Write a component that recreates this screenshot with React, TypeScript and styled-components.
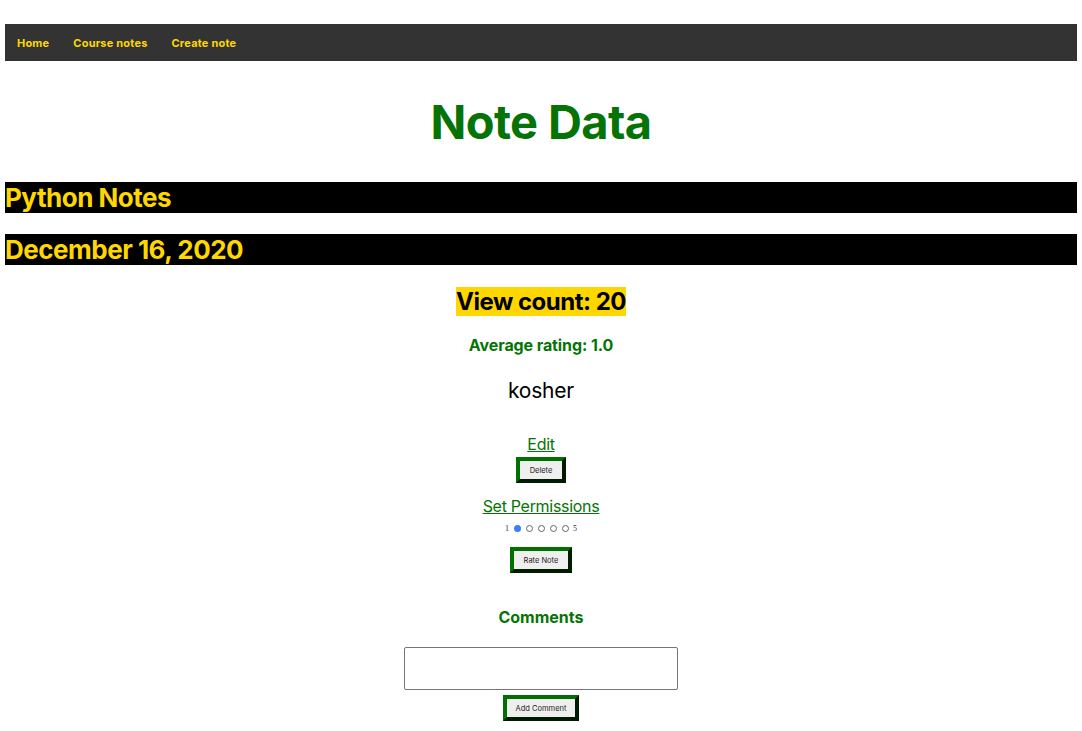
import React from "react";
import styled, { createGlobalStyle } from "styled-components";

const Global = createGlobalStyle`
  html, body { margin: 0; padding: 0; background: #fff; }
  body { font-family: Inter, "Noto Sans", sans-serif; }
`;

const GREEN = "#057305";
const YELLOW = "#ffd700";

const Page = styled.div`
  padding: 24px 5px 0;
  display: flex;
  flex-direction: column;
`;

const Nav = styled.nav`
  background: #333;
  height: 37px;
  display: flex;
  align-items: center;
`;

const NavLink = styled.a`
  color: ${YELLOW};
  font-weight: 700;
  font-size: 11px;
  letter-spacing: 0.2px;
  text-decoration: none;
  padding: 0 12px;
`;

const Title = styled.h1`
  margin: 32px 0 0;
  text-align: center;
  color: ${GREEN};
  font-size: 47px;
  letter-spacing: -0.6px;
  line-height: 58px;
  font-weight: 700;
`;

const Bar = styled.h2<{ $top: number }>`
  margin: ${(p) => p.$top}px 0 0;
  background: #000;
  color: ${YELLOW};
  font-size: 26px;
  letter-spacing: -0.5px;
  line-height: 31px;
  height: 31px;
  font-weight: 700;
`;

const Center = styled.div`
  display: flex;
  flex-direction: column;
  align-items: center;
`;

const ViewCount = styled.h2`
  margin: 22px 0 0;
  background: ${YELLOW};
  color: #000;
  font-size: 24px;
  letter-spacing: -0.5px;
  line-height: 29px;
  font-weight: 700;
`;

const Rating = styled.h3`
  margin: 19px 0 0;
  color: ${GREEN};
  font-size: 16px;
  letter-spacing: -0.1px;
  line-height: 20px;
  font-weight: 700;
`;

const Body = styled.p`
  margin: 23px 0 0;
  font-size: 21px;
  letter-spacing: -0.2px;
  line-height: 26px;
  color: #000;
`;

const Link = styled.a<{ $top: number }>`
  margin-top: ${(p) => p.$top}px;
  color: ${GREEN};
  font-size: 16px;
  letter-spacing: -0.3px;
  line-height: 20px;
  text-decoration: underline;
`;

const Button = styled.button<{ $top: number; $w: number }>`
  margin-top: ${(p) => p.$top}px;
  width: ${(p) => p.$w}px;
  height: 26px;
  background: #efefef;
  border: 4px outset #007000;
  font-family: Inter, sans-serif;
  font-size: 7.5px;
  color: #222;
  padding: 0;
`;

const RadioRow = styled.div`
  margin-top: 6px;
  height: 12px;
  display: flex;
  align-items: center;
  gap: 4px;
  font-family: "Liberation Serif", serif;
  font-size: 8px;
  color: #333;
`;

const Radio = styled.input`
  appearance: none;
  margin: 0 0 0 1px;
  width: 7px;
  height: 7px;
  border: 1px solid #666;
  border-radius: 50%;
  box-sizing: border-box;
  &:checked {
    border: none;
    background: #3b7ff5;
  }
`;

const Comments = styled.h3`
  margin: 34px 0 0;
  color: ${GREEN};
  font-size: 16px;
  line-height: 20px;
  font-weight: 700;
`;

const TextArea = styled.textarea`
  margin-top: 20px;
  width: 274px;
  height: 43px;
  box-sizing: border-box;
  border: 1px solid #767676;
  border-radius: 2px;
  resize: none;
`;

export default function App() {
  return (
    <>
      <Global />
      <Page>
        <Nav>
          <NavLink href="#">Home</NavLink>
          <NavLink href="#">Course notes</NavLink>
          <NavLink href="#">Create note</NavLink>
        </Nav>
        <Title>Note Data</Title>
        <Bar $top={31}>Python Notes</Bar>
        <Bar $top={21}>December 16, 2020</Bar>
        <Center>
          <ViewCount>View count: 20</ViewCount>
          <Rating>Average rating: 1.0</Rating>
          <Body>kosher</Body>
          <Link href="#" $top={30}>Edit</Link>
          <Button $top={3} $w={50}>Delete</Button>
          <Link href="#" $top={13}>Set Permissions</Link>
          <RadioRow>
            <span>1</span>
            <Radio type="radio" name="r" defaultChecked />
            <Radio type="radio" name="r" />
            <Radio type="radio" name="r" />
            <Radio type="radio" name="r" />
            <Radio type="radio" name="r" />
            <span>5</span>
          </RadioRow>
          <Button $top={13} $w={62}>Rate Note</Button>
          <Comments>Comments</Comments>
          <TextArea />
          <Button $top={5} $w={76}>Add Comment</Button>
        </Center>
      </Page>
    </>
  );
}
